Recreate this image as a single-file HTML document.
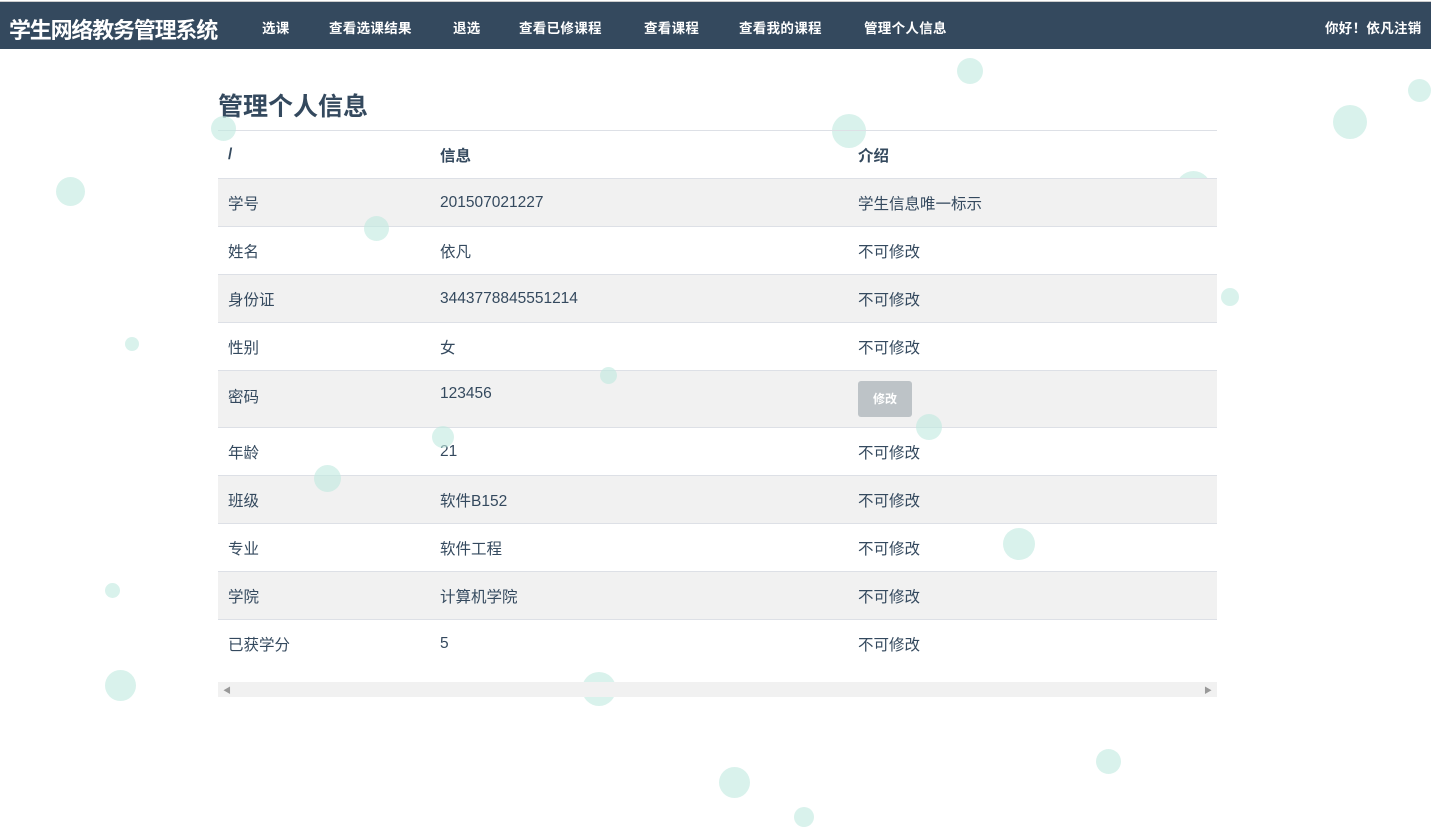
<!DOCTYPE html>
<html><head><meta charset="utf-8"><style>
*{margin:0;padding:0;box-sizing:border-box}
body{width:1431px;height:835px;overflow:hidden;background:#fff;font-family:"Liberation Sans","Noto Sans CJK SC",sans-serif;color:#34495e;position:relative}
.nav{position:absolute;top:1px;left:0;width:1431px;height:48px;background:#34495e;color:#fff;border-top:1px solid #ccc}
.nav .brand{position:absolute;left:9px;top:11px;font-size:22px;font-weight:bold;letter-spacing:-1.2px}
.nav a{position:absolute;top:15px;font-size:13.5px;font-weight:bold;letter-spacing:.3px}
.b{position:absolute;border-radius:50%;background:#bfe9df;opacity:.6}
h1{position:absolute;left:218px;top:87px;font-size:25px;font-weight:bold}
table{position:absolute;left:218px;top:130px;width:999px;border-collapse:collapse;font-size:15.5px}
td,th{text-align:left;padding:0 10px;height:48px;border-top:1px solid #dde0e6;font-weight:normal}
th{font-weight:bold}
tr.g td{background:#f1f1f1}
td:nth-child(1),th:nth-child(1){width:212px}
td:nth-child(2),th:nth-child(2){width:418px}
.btn{display:inline-block;background:#bdc3c7;color:#fff;font-size:12px;font-weight:bold;border-radius:3px;width:54px;height:36px;line-height:36px;text-align:center;margin-top:10px}
.sb{position:absolute;left:218px;top:682px;width:999px;height:15px;background:#f1f1f1;font-size:8px;color:#999}
</style></head><body>
<div class="nav"><div class="brand">学生网络教务管理系统</div>
<a style="left:262px">选课</a><a style="left:329px">查看选课结果</a><a style="left:453px">退选</a><a style="left:519px">查看已修课程</a><a style="left:644px">查看课程</a><a style="left:739px">查看我的课程</a><a style="left:864px">管理个人信息</a><a style="left:1325px">你好！依凡注销</a></div>
<div class="b" style="left:957px;top:58px;width:26px;height:26px"></div>
<div class="b" style="left:1333px;top:105px;width:34px;height:34px"></div>
<div class="b" style="left:832px;top:114px;width:34px;height:34px"></div>
<div class="b" style="left:1176px;top:171px;width:35px;height:35px"></div>
<div class="b" style="left:56px;top:177px;width:29px;height:29px"></div>
<div class="b" style="left:1408px;top:79px;width:23px;height:23px"></div>
<div class="b" style="left:125px;top:337px;width:14px;height:14px"></div>
<div class="b" style="left:1003px;top:528px;width:32px;height:32px"></div>
<div class="b" style="left:105px;top:670px;width:31px;height:31px"></div>
<div class="b" style="left:582px;top:672px;width:34px;height:34px"></div>
<div class="b" style="left:719px;top:767px;width:31px;height:31px"></div>
<div class="b" style="left:1096px;top:749px;width:25px;height:25px"></div>
<div class="b" style="left:1221px;top:288px;width:18px;height:18px"></div>
<div class="b" style="left:105px;top:583px;width:15px;height:15px"></div>
<div class="b" style="left:794px;top:807px;width:20px;height:20px"></div>
<h1>管理个人信息</h1>
<table>
<tr><th>/</th><th>信息</th><th>介绍</th></tr>
<tr class="g"><td>学号</td><td>201507021227</td><td>学生信息唯一标示</td></tr>
<tr><td>姓名</td><td>依凡</td><td>不可修改</td></tr>
<tr class="g"><td>身份证</td><td>3443778845551214</td><td>不可修改</td></tr>
<tr><td>性别</td><td>女</td><td>不可修改</td></tr>
<tr class="g"><td style="height:57px;vertical-align:top;padding-top:14px">密码</td><td style="vertical-align:top;padding-top:14px">123456</td><td style="vertical-align:top"><span class="btn">修改</span></td></tr>
<tr><td>年龄</td><td>21</td><td>不可修改</td></tr>
<tr class="g"><td>班级</td><td>软件B152</td><td>不可修改</td></tr>
<tr><td>专业</td><td>软件工程</td><td>不可修改</td></tr>
<tr class="g"><td>学院</td><td>计算机学院</td><td>不可修改</td></tr>
<tr><td>已获学分</td><td>5</td><td>不可修改</td></tr>
</table>
<div class="sb"><span style="position:absolute;left:5px;top:3px">◀</span><span style="position:absolute;right:5px;top:3px">▶</span></div>
<div class="b" style="left:211px;top:116px;width:25px;height:25px"></div>
<div class="b" style="left:364px;top:216px;width:25px;height:25px"></div>
<div class="b" style="left:432px;top:426px;width:22px;height:22px"></div>
<div class="b" style="left:916px;top:414px;width:26px;height:26px"></div>
<div class="b" style="left:314px;top:465px;width:27px;height:27px"></div>
<div class="b" style="left:600px;top:367px;width:17px;height:17px"></div>
</body></html>
